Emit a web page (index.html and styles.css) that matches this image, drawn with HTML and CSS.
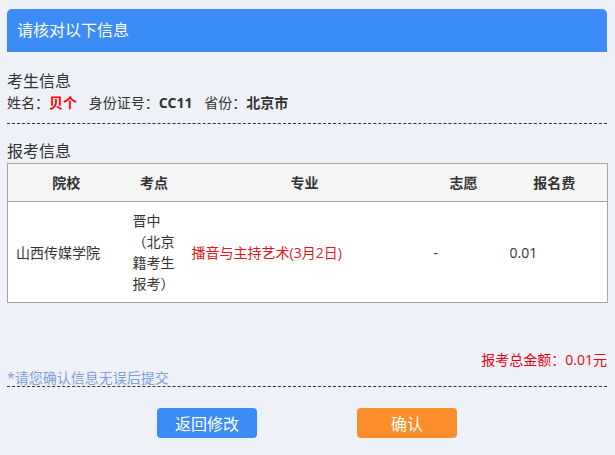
FILE: index.html
```html
<!DOCTYPE html>
<html lang="zh-CN">
<head>
<meta charset="UTF-8">
<meta name="viewport" content="width=device-width, initial-scale=1.0">
<title>请核对以下信息</title>
    <link rel="stylesheet" href="styles.css">
</head>
<body>
    <div class="confirm">
        <!-- 标题 -->
        <div class="confirm-title">请核对以下信息</div>

        <!-- 考生信息 -->
        <div class="student">
            <div class="section-title">考生信息</div>
            <div class="student-info">
                <span class="item">姓名：<b class="name">贝个</b></span>
                <span class="item">身份证号：<b>CC11</b></span>
                <span class="item">省份：<b>北京市</b></span>
            </div>
        </div>

        <!-- 报考信息 -->
        <div class="section-title apply-title">报考信息</div>
        <table class="apply-table">
            <thead>
                <tr>
                    <th>院校</th>
                    <th>考点</th>
                    <th>专业</th>
                    <th>志愿</th>
                    <th>报名费</th>
                </tr>
            </thead>
            <tbody>
                <tr>
                    <td>山西传媒学院</td>
                    <td>晋中（北京籍考生报考）</td>
                    <td class="major">播音与主持艺术(3月2日)</td>
                    <td>-</td>
                    <td>0.01</td>
                </tr>
            </tbody>
        </table>

        <div class="summary">
            <div class="total">报考总金额：0.01元</div>
            <div class="tip">*请您确认信息无误后提交</div>
        </div>

        <!-- 按钮 -->
        <div class="actions">
            <button class="btn btn-back">返回修改</button>
            <button class="btn btn-ok">确认</button>
        </div>
    </div>
</body>
</html>
```

FILE: styles.css
```css
body {
    margin: 0;
    background: #eef1f8;
    color: #333;
    font-family: "Open Sans", "Noto Sans CJK TC", "Noto Sans CJK SC", sans-serif;
    font-size: 14px;
}
.confirm {
    width: 600px;
    margin-left: 7px;
    padding-top: 9px;
}
.confirm-title {
    height: 43px;
    line-height: 43px;
    padding-left: 10px;
    border-radius: 5px 5px 0 0;
    background: #3b8cf6;
    color: #fff;
    font-size: 16px;
}
.section-title {
    font-size: 16px;
    line-height: 22px;
}
.student {
    margin-top: 18px;
    padding-bottom: 9px;
    border-bottom: 1px dashed #333; /* 虚线分隔 */
}
.student-info {
    line-height: 22px;
}
.student-info .item {
    margin-right: 8px;
}
.student-info b {
    font-weight: bold;
}
.student-info .name {
    color: #f00;
}
.apply-title {
    margin-top: 16px;
}

/* 报考表格 */
.apply-table {
    width: 600px;
    margin-top: 1px;
    border: 1px solid #a5a5a5;
    border-collapse: collapse;
    table-layout: fixed;
    background: #fff;
}
.apply-table th,
.apply-table td {
    box-sizing: border-box;
    padding: 8px;
    line-height: 21px;
    font-size: 14px;
}
.apply-table th {
    background: #f5f5f5;
    border-bottom: 1px solid #a5a5a5;
    text-align: center;
    font-weight: bold;
    color: #333;
}
.apply-table td {
    text-align: left;
    vertical-align: middle;
}
.apply-table th:nth-child(1) { width: 117px; }
.apply-table th:nth-child(2) { width: 59px; }
.apply-table th:nth-child(3) { width: 242px; }
.apply-table th:nth-child(4) { width: 76px; }
.apply-table th:nth-child(5) { width: 106px; }
.apply-table .major {
    color: #e0181e;
}

.summary {
    margin-top: 48px;
    border-bottom: 1px dashed #333;
}
.total {
    text-align: right;
    line-height: 18px;
    color: #e60012;
}
.tip {
    line-height: 17px;
    color: #7c9fd8;
}

.actions {
    display: flex;
    justify-content: center;
    gap: 100px;
    margin-top: 21px;
}
.btn {
    width: 100px;
    height: 30px;
    padding: 0;
    border: none;
    border-radius: 4px;
    color: #fff;
    font-family: "Noto Sans CJK SC", sans-serif;
    font-size: 16px;
    cursor: pointer;
}
.btn-back {
    background: #3b8cf6;
}
.btn-ok {
    background: #fb8d2b;
}
```
